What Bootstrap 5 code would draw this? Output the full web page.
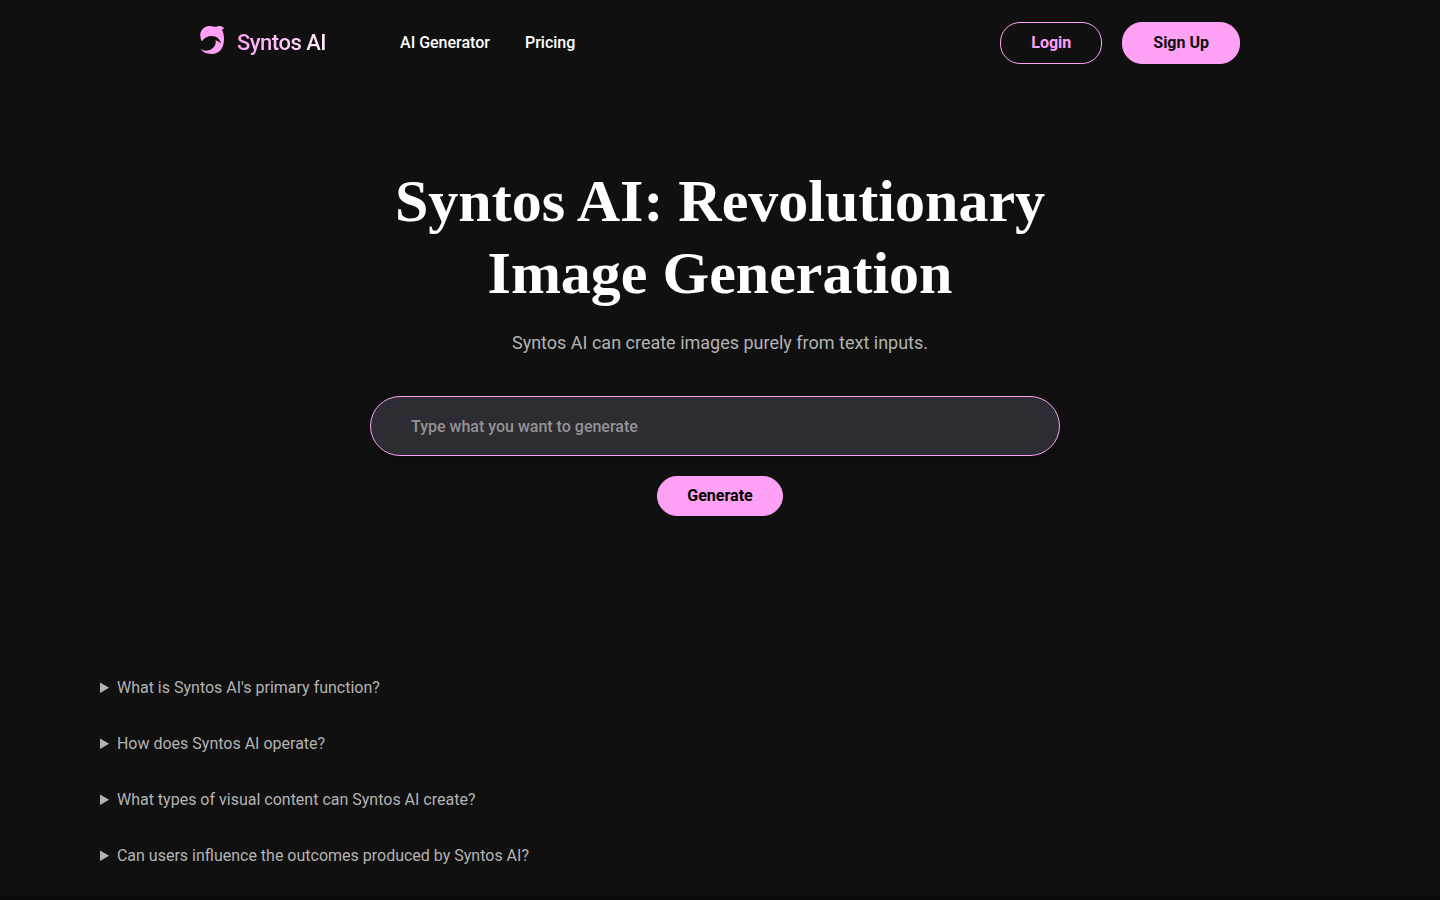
<!DOCTYPE html>
<html lang="en">
<head>
<meta charset="utf-8">
<meta name="viewport" content="width=device-width, initial-scale=1">
<title>Syntos AI</title>
<link href="https://cdn.jsdelivr.net/npm/bootstrap@5.3.0/dist/css/bootstrap.min.css" rel="stylesheet">
<style>
  :root { --pink: #ffa1f5; --ink: #101010; --soft: #b3b3b3; }
  body { background: #080808; color: #fff; font-family: Roboto, sans-serif; }
  .page-main { background: var(--ink); }
  .topbar { max-width: 1040px; padding: 22px 0; }
  .brand-name {
    font-size: 22px; line-height: 28px; font-weight: 500; letter-spacing: -0.5px;
    background: linear-gradient(90deg, var(--pink), #ffecfd);
    -webkit-background-clip: text; background-clip: text; color: transparent;
  }
  .brand-link { gap: 12px; margin-right: 74px; }
  .brand-link svg { margin-bottom: 6px; }
  .menu { gap: 35px; }
  .menu .nav-item .nav-link { color: #fff; font-weight: 500; padding: 0; }
  .actions { gap: 20px; }
  .pill { border-radius: 20px; padding: 7px 30px; font-weight: 700; line-height: 26px; border: 1px solid var(--pink); color: var(--pink); }
  .pill:hover { background: var(--pink); color: #000; }
  .pill-fill { background: var(--pink); color: var(--ink); }
  .pill-go { padding: 6px 29px; color: #000; }
  .hero { max-width: 700px; padding: 79px 0 150px; }
  .hero h1 { font-family: "Times New Roman", "Liberation Serif", serif; font-weight: 700; font-size: 60px; line-height: 72px; margin-bottom: 20px; }
  .hero .intro { font-size: 18px; line-height: 27px; color: var(--soft); margin-bottom: 40px; }
  .prompt-box, .prompt-box:focus {
    height: 60px; border-radius: 30px; border: 1px solid var(--pink); background: #2e2c33; color: #fff;
    padding: 0 40px; font-weight: 500; box-shadow: 0 4px 10px rgba(0, 0, 0, .25);
  }
  .prompt-box::placeholder { color: #959393; }
  .prompt-wrap { padding-right: 10px; margin-bottom: 20px; }
  .faq { padding: 10px 100px 28px; color: var(--soft); gap: 32px; }
</style>
</head>
<body>
<div class="page-main">
  <header class="px-3 px-lg-0">
    <nav class="topbar navbar navbar-expand mx-auto flex-wrap" aria-label="Main">
      <a class="brand-link d-flex align-items-center text-decoration-none" href="#">
        <svg width="25" height="30" viewBox="0 0 25 30" aria-hidden="true"><path fill="#ffa1f5" d="M1.200 15.600C.1 12-.2 8.500 1.200 6C3 2.800 6.300 1 10 1C12.500 1 13.800 1.900 15.600 1.800C17.200 1.700 18.200 1 20 1C21.800 1 23.200 2 24 3.800C23.200 4.300 22.400 4.500 21.700 4.700C23.300 7 24 10 24 14C24 22.500 20 29 11.700 29C6.500 29 2.500 27.200.5 23.800C3 25.700 6 26.300 9 25.300C12.500 24.200 15.200 21.500 15.700 17.800C15.800 16.800 15.700 16.200 15.400 15.300C17.300 15.800 19.300 16.800 20.800 18.600C20.800 14.500 16.500 11 11.500 11C7.300 11 4.200 13 2.200 16Z"/></svg>
        <span class="brand-name">Syntos AI</span>
      </a>
      <ul class="menu navbar-nav me-auto">
        <li class="nav-item"><a class="nav-link" href="#">AI Generator</a></li>
        <li class="nav-item"><a class="nav-link" href="#">Pricing</a></li>
      </ul>
      <div class="actions d-flex">
        <button type="button" class="btn pill">Login</button>
        <button type="button" class="btn pill pill-fill">Sign Up</button>
      </div>
    </nav>
  </header>
  <main>
    <section class="hero mx-auto text-center">
      <h1>Syntos AI: Revolutionary Image Generation</h1>
      <p class="intro">Syntos AI can create images purely from text inputs.</p>
      <form>
        <div class="prompt-wrap">
          <input type="text" class="prompt-box form-control" placeholder="Type what you want to generate" aria-label="Type what you want to generate">
        </div>
        <button type="button" class="btn pill pill-fill pill-go">Generate</button>
      </form>
    </section>
    <section class="faq d-flex flex-column">
      <details><summary>What is Syntos AI's primary function?</summary></details>
      <details><summary>How does Syntos AI operate?</summary></details>
      <details><summary>What types of visual content can Syntos AI create?</summary></details>
      <details><summary>Can users influence the outcomes produced by Syntos AI?</summary></details>
    </section>
  </main>
</div>
<script src="https://cdn.jsdelivr.net/npm/bootstrap@5.3.0/dist/js/bootstrap.bundle.min.js"></script>
</body>
</html>
